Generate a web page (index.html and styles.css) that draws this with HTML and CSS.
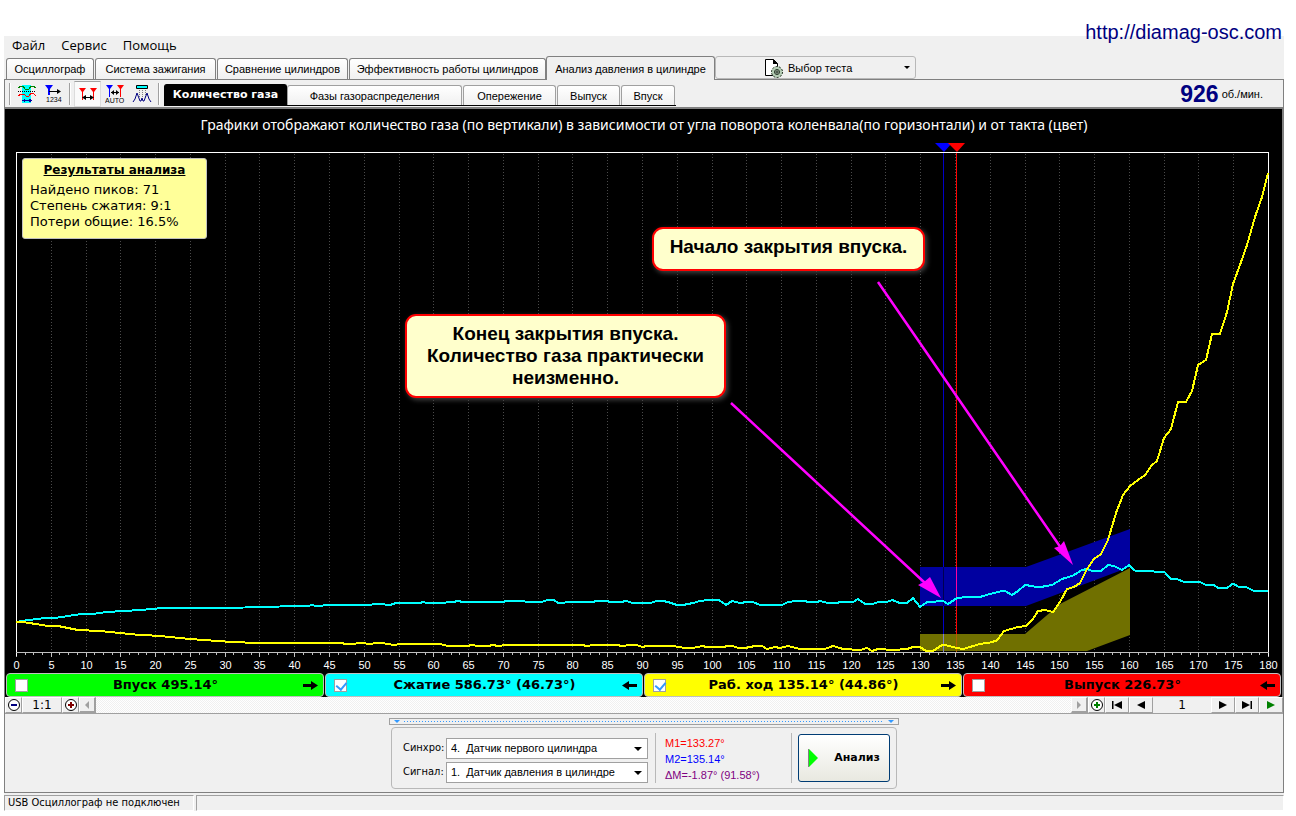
FILE: index.html
```html
<!DOCTYPE html>
<html lang="ru">
<head>
<meta charset="utf-8">
<title>Анализ давления в цилиндре</title>
<link rel="stylesheet" href="styles.css">
</head>
<body>
<a class="site-link" href="http://diamag-osc.com">http://diamag-osc.com</a>
<div class="app">
  <nav class="menu">
    <button type="button">Файл</button>
    <button type="button">Сервис</button>
    <button type="button">Помощь</button>
  </nav>

  <div class="tabs">
    <button class="tab tab-osc" type="button">Осциллограф</button>
    <button class="tab tab-ign" type="button">Система зажигания</button>
    <button class="tab tab-cmp" type="button">Сравнение цилиндров</button>
    <button class="tab tab-eff" type="button">Эффективность работы цилиндров</button>
    <button class="tab tab-prs tab-active" type="button">Анализ давления в цилиндре</button>
    <button class="test-pick" type="button">
      <svg width="20" height="22" viewBox="0 0 20 22">
        <path d="M1.5 2.500h8l4 4v12h-12z" fill="#fff" stroke="#000"/>
        <path d="M9 2v5h5z" fill="#000"/>
        <circle cx="13" cy="15" r="5.5" fill="#b4ccb4" stroke="#1c2c1c" stroke-dasharray="2 1.4"/>
        <circle cx="13" cy="15" r="4.500" fill="#b4ccb4"/>
        <circle cx="13" cy="15" r="2.500" fill="#e8f4e8" stroke="#1c2c1c"/>
        <path d="M13 13v4M11 15h4" stroke="#1c2c1c"/>
      </svg>
      <span>Выбор теста</span>
      <i class="caret"></i>
    </button>
  </div>

  <main class="panel">
    <div class="toolbar">
      <i class="grip"></i>
      <button class="tool" type="button" aria-label="Сигналы">
        <svg width="20" height="20" viewBox="0 0 20 20" fill="none" shape-rendering="crispEdges">
          <path d="M5 1h9v18H5z" fill="#00ffff"/>
          <path d="M1 4l3-2h2l2 3h4l2-3h2l3 2" stroke="#008000"/>
          <path d="M1 7.500h18" stroke="#000" stroke-dasharray="1 1"/>
          <path d="M1 12l3-2h3l2 2h3l2-3h2l3 3" stroke="#ff0000"/>
          <path d="M6 16.500h8" stroke="#0000a0"/><path d="M5 16.500l3-2v4zM15 16.500l-3-2v4z" fill="#0000a0"/>
        </svg>
      </button>
      <button class="tool" type="button" aria-label="Нумерация">
        <svg width="20" height="20" viewBox="0 0 20 20" fill="none">
          <path d="M1 1h8L6 5v6H4V5z" fill="#0000ff"/><path d="M5 7.500h10" stroke="#000"/><path d="M13 5l4 2.500-4 2.500z" fill="#000"/>
          <text x="2" y="18" class="tool-text">1234</text>
        </svg>
      </button>
      <i class="grip"></i>
      <button class="tool tool-on" type="button" aria-label="Маркеры">
        <svg width="20" height="20" viewBox="0 0 20 20" fill="none">
          <path d="M1 4h7L5 8v8H4V8zM12 4h7l-3 4v8h-1V8z" fill="#ff0000"/><path d="M5 13.500h10" stroke="#000"/><path d="M4 13.500l4-2.500v5zM16 13.500l-4-2.500v5z" fill="#000"/>
        </svg>
      </button>
      <button class="tool" type="button" aria-label="Авто маркеры">
        <svg width="20" height="20" viewBox="0 0 20 20" fill="none">
          <path d="M1 1h7L5 5v8H4V5z" fill="#0000ff"/><path d="M12 1h7l-3 4v8h-1V5z" fill="#ff0000"/><path d="M6 8.500h8" stroke="#000"/><path d="M6 8.500l3-2.500v5zM14 8.500l-3-2.500v5z" fill="#000"/>
          <text x="0" y="19" class="tool-text">AUTO</text>
        </svg>
      </button>
      <button class="tool" type="button" aria-label="Пики">
        <svg width="20" height="20" viewBox="0 0 20 20" fill="none">
          <path d="M4.500 1.500h11v3h-11z" fill="#00ffff" stroke="#000"/><path d="M7.500 6v8M10.500 6v8M13.500 6v8" stroke="#808080" stroke-dasharray="1 1"/>
          <path d="M1 18l2-3 2-6 3 8h1l1-3 1 3h1l3-8 2 6 2 3" stroke="#000080"/>
        </svg>
      </button>
      <i class="grip grip-last"></i>
      <div class="subtabs">
        <button class="subtab sub-gas subtab-active" type="button">Количество газа</button>
        <button class="subtab sub-phase" type="button">Фазы газораспределения</button>
        <button class="subtab sub-adv" type="button">Опережение</button>
        <button class="subtab sub-exh" type="button">Выпуск</button>
        <button class="subtab sub-int" type="button">Впуск</button>
      </div>
      <div class="rpm"><b>926</b><span>об./мин.</span></div>
    </div>

    <div class="scope">
      <div class="chart">
        <svg class="plot" viewBox="6 109 1276 564" fill="none">
          <text class="plot-title" x="644" y="130">Графики отображают количество газа (по вертикали) в зависимости от угла поворота коленвала(по горизонтали) и от такта (цвет)</text>
          <g id="grid"></g>
          <path d="M920 567H1026L1130 529V567L1026 606H920z" fill="#0000a0"/>
          <path d="M920 634H1025L1060 604L1130 568V635L1087 651H920z" fill="#707000"/>
          <path d="M16.500 656V152.500H1268.500V656" stroke="#fff" shape-rendering="crispEdges"/>
          <path d="M16 652.500H1269" stroke="#c0c0c0" shape-rendering="crispEdges"/>
          <path d="M943.500 153V567M943.500 606V634" stroke="#0000c8" shape-rendering="crispEdges"/>
          <path d="M943.500 567V606" stroke="#000050" shape-rendering="crispEdges"/>
          <path d="M943.500 634V652" stroke="#8080c8" shape-rendering="crispEdges"/>
          <path d="M956.500 153V652" stroke="#ff0000" shape-rendering="crispEdges"/>
          <path d="M956.500 567V606" stroke="#ff00a0" shape-rendering="crispEdges"/>
          <path d="M956.500 634V652" stroke="#b06000" shape-rendering="crispEdges"/>
          <path d="M935 143h17l-8 9z" fill="#0000ff"/>
          <path d="M948 143h17l-8 9z" fill="#ff0000"/>
          <polyline class="wave" stroke="#00ffff" points="16,622 25,620.500 45,618 58,617.500 78,614.500 92,614 107,612 140,610 157,608.500 190,608 245,607.500 280,606.500 308,606 312,605 316,606 330,605 365,605 380,604 390,605 396,603 420,603 423,602 427,603 440,603 453,602 458,601 463,602 502,602 507,601 523,601 527,602 542,602 547,600 554,600 558,603 563,603 567,602 592,602 597,601 607,601 610,602 620,602 627,601 632,603 650,603 657,601 663,601 668,602 677,605 683,605 693,603 700,601 708,600 719,600 726,605 732,601 740,603 747,602 753,602 760,605 782,605 788,602 797,601 805,601 808,602 817,602 820,601 828,603 837,603 840,602 853,602 858,599 865,604 873,604 878,602 887,602 892,600 900,603 907,603 913,598 920,607 927,602 932,602 940,601 943,601 948,604 957,598 968,597 978,597.500 990,594 1002,591 1005,591 1012,595 1018,591 1025,585 1032,586 1038,587.500 1052,585 1062,579 1073,575.500 1082,570 1087,569 1092,571 1101,571 1108,565 1114,566 1122,570 1129,565 1136,571.500 1145,571 1150,570.500 1156,572 1165,572.500 1171,579 1177,579 1184,582 1200,582 1205,584.500 1213,584.500 1218,588 1227,588 1233,583.500 1239,587 1246,587 1253,590.500 1268,590.500"/>
          <polyline class="wave" stroke="#ffff00" points="16,622 23,622 45,625.500 58,626 78,630 100,631 135,634.500 160,636 190,639 225,641.500 255,643 280,643.500 295,643 340,643 347,644 356,643.500 362,643 370,644 376,643 382,643 388,644 394,645 400,644 440,644 448,646 467,646 472,645 478,646 488,646 493,645 498,646 507,645 582,645 587,646 593,645 617,645 622,646 630,645 637,645 642,647 647,646 673,646 685,648 693,648 702,646 707,647 723,647 728,646 733,646 738,648 745,648 755,646 762,646 767,649 775,647 780,648 788,646 800,649 825,649 833,646 843,649 860,650 867,648 872,651 878,649 893,650 907,649 913,647 920,647 926,651 933,651 942,645 947,645.500 957,648 963,649 980,644 990,642.500 997,640.500 1004,631 1018,627 1026,626 1033,619 1038,611 1045,610 1053,612 1060,602 1067,589 1074,587 1080,583 1087,569 1094,559 1101,554 1108,540 1116,513 1123,495 1130,486 1138,480 1145,475 1152,465 1157,461 1164,438 1171,429 1178,402 1186,402 1192,391 1198,365 1206,360 1212,334 1220,334 1227,312 1233,284 1241,262 1247,245 1255,217 1262,197 1268,173"/>
          <path d="M731 403L925 583M878 282L1061 548" stroke="#ff00ff" stroke-width="2.500"/>
          <path d="M941 598L930 577L924 582L918 585zM1073 565L1064 541L1060 546L1054 548z" fill="#ff00ff"/>
        </svg>
        <section class="results">
          <h2>Результаты анализа</h2>
          <p>Найдено пиков: 71</p>
          <p>Степень сжатия: 9:1</p>
          <p>Потери общие: 16.5%</p>
        </section>
        <div class="callout callout-start">Начало закрытия впуска.</div>
        <div class="callout callout-end">Конец закрытия впуска. Количество газа практически неизменно.</div>
      </div>
      <div class="strokes">
        <label class="stroke stroke-intake"><input type="checkbox"><span>Впуск 495.14°</span><svg width="15" height="9" viewBox="0 0 15 9"><path d="M0 3h8V0l7 4.500L8 9V6H0z"/></svg></label>
        <label class="stroke stroke-comp"><input type="checkbox" checked><span>Сжатие 586.73° (46.73°)</span><svg width="15" height="9" viewBox="0 0 15 9"><path d="M15 3H7V0L0 4.500 7 9V6h8z"/></svg></label>
        <label class="stroke stroke-power"><input type="checkbox" checked><span>Раб. ход 135.14° (44.86°)</span><svg width="15" height="9" viewBox="0 0 15 9"><path d="M0 3h8V0l7 4.500L8 9V6H0z"/></svg></label>
        <label class="stroke stroke-exh"><input type="checkbox"><span>Выпуск 226.73°</span><svg width="15" height="9" viewBox="0 0 15 9"><path d="M15 3H7V0L0 4.500 7 9V6h8z"/></svg></label>
      </div>
    </div>

    <div class="scrollrow">
      <button class="sq w17" type="button" aria-label="Уменьшить"><svg width="14" height="14" viewBox="0 0 14 14"><circle cx="7" cy="7" r="5.500" fill="#fff" stroke="#000"/><path d="M4 7h6" stroke="#000080" stroke-width="2"/></svg></button>
      <button class="sq w39" type="button">1:1</button>
      <button class="sq w17" type="button" aria-label="Увеличить"><svg width="14" height="14" viewBox="0 0 14 14"><circle cx="7" cy="7" r="5.500" fill="#fff" stroke="#000"/><path d="M4 7h6M7 4v6" stroke="#800000" stroke-width="2"/></svg></button>
      <button class="sq sq-raised w17" type="button" aria-label="Влево"><svg width="6" height="8" viewBox="0 0 6 8"><path d="M5 0v8L1 4z" fill="#a0a0a0"/></svg></button>
      <div class="track"></div>
      <button class="sq sq-raised w17" type="button" aria-label="Вправо"><svg width="6" height="8" viewBox="0 0 6 8"><path d="M1 0v8l4-4z" fill="#a0a0a0"/></svg></button>
      <button class="sq w17" type="button" aria-label="Добавить"><svg width="14" height="14" viewBox="0 0 14 14"><circle cx="7" cy="7" r="5.500" fill="#fff" stroke="#000"/><path d="M4 7h6M7 4v6" stroke="#008000" stroke-width="2"/></svg></button>
      <button class="sq w23" type="button" aria-label="Первый"><svg width="10" height="8" viewBox="0 0 10 8"><path d="M0 0h1.500v8H0zM10 0v8L2 4z"/></svg></button>
      <button class="sq w23" type="button" aria-label="Предыдущий"><svg width="8" height="8" viewBox="0 0 8 8"><path d="M8 0v8L0 4z"/></svg></button>
      <output class="page-no">1</output>
      <button class="sq w23" type="button" aria-label="Следующий"><svg width="8" height="8" viewBox="0 0 8 8"><path d="M0 0v8l8-4z"/></svg></button>
      <button class="sq w23" type="button" aria-label="Последний"><svg width="10" height="8" viewBox="0 0 10 8"><path d="M8.500 0H10v8H8.500zM0 0v8l8-4z"/></svg></button>
      <button class="sq w23" type="button" aria-label="Пуск"><svg width="8" height="8" viewBox="0 0 8 8"><path d="M0 0v8l8-4z" fill="#008000"/></svg></button>
    </div>

    <div class="bottom">
      <div class="splitter"><i class="mini"></i><i class="dots"></i><i class="mini"></i></div>
      <div class="group">
        <form class="sources">
          <label for="sync">Синхро:</label>
          <div class="pick"><select id="sync"><option>4.&nbsp; Датчик первого цилиндра</option></select></div>
          <label for="signal">Сигнал:</label>
          <div class="pick"><select id="signal"><option>1.&nbsp; Датчик давления в цилиндре</option></select></div>
        </form>
        <div class="markers">
          <p class="m-one">M1=133.27°</p>
          <p class="m-two">M2=135.14°</p>
          <p class="m-delta">ΔM=-1.87° (91.58°)</p>
        </div>
        <button class="analyse" type="button"><svg width="11" height="20" viewBox="0 0 11 20"><path d="M1 1v18l9-9z" fill="#00ff00"/><path d="M.5 19V1" stroke="#808080"/></svg><span>Анализ</span></button>
      </div>
    </div>
  </main>

  <footer class="status">
    <div class="status-main">USB Осциллограф не подключен</div>
    <div class="status-rest"></div>
  </footer>
</div>
<script src="chart.js"></script>
</body>
</html>
```
FILE: chart.js
```js
(function () {
  var NS = 'http://www.w3.org/2000/svg';
  var grid = document.getElementById('grid');
  var left = 16, width = 1252, top = 154, base = 653;

  function add(name, attrs, text) {
    var el = document.createElementNS(NS, name);
    Object.keys(attrs).forEach(function (k) { el.setAttribute(k, attrs[k]); });
    if (text !== undefined) el.textContent = text;
    grid.appendChild(el);
  }

  // Four minor divisions in each five degrees of crankshaft angle.
  for (var i = 0; i <= 144; i++) {
    var x = Math.round(left + width * i / 144) + 0.5;
    var major = i % 4 === 0;
    add('path', { 'class': 'tick', d: 'M' + x + ' ' + base + 'v' + (major ? 4 : 2) });
    if (!major) continue;
    if (i > 0 && i < 144) {
      add('path', { 'class': 'gridline', d: 'M' + x + ' ' + top + 'V' + base });
    }
    add('text', { 'class': 'axis-label', x: x, y: 669 }, i / 4 * 5);
  }
})();
```
FILE: styles.css
```css
* { box-sizing: border-box; }

body {
  margin: 0;
  padding: 36px 12px 0 4px;
  background: #fff;
  color: #000;
  font: 11px/14px "Liberation Sans", sans-serif;
}

button, select { margin: 0; padding: 0; border: 0; background: none; color: inherit; font: inherit; }
button { display: flex; align-items: center; justify-content: center; white-space: nowrap; }
p, h2 { margin: 0; }
svg { display: block; flex: none; }

.site-link {
  position: absolute;
  top: 20px;
  right: 14px;
  color: #000080;
  font-size: 20px;
  line-height: 24px;
  text-decoration: none;
}

.app { background: #f0f0f0; }

.menu { display: flex; gap: 16px; height: 20px; padding-left: 8px; }
.menu button { height: 18px; font: 13px/18px "Open Sans", "Noto Sans", sans-serif; }

.tabs { display: flex; align-items: flex-end; height: 24px; padding-left: 2px; border-bottom: 1px solid #808080; }
.tab {
  height: 21px;
  margin-right: 1px;
  border: 1px solid #808080;
  border-bottom: 0;
  border-radius: 3px 3px 0 0;
  background: linear-gradient(#fff, #f0f0f0);
}
.tab-osc { width: 88px; }
.tab-ign { width: 121px; }
.tab-cmp { width: 131px; }
.tab-eff { width: 197px; margin-right: 0; }
.tab-active { width: 169px; height: 24px; margin-bottom: -1px; background: #f0f0f0; margin-right: 0; }
.test-pick {
  width: 201px;
  height: 23px;
  gap: 4px;
  padding: 0 5px 0 48px;
  border: 1px solid #b8b8b8;
  border-radius: 3px;
  justify-content: flex-start;
}
.caret { margin-left: auto; border: 3px solid transparent; border-top-color: #000; border-bottom: 0; }

.panel { border: 1px solid #808080; border-top: 0; }
.toolbar { display: flex; align-items: center; height: 27px; padding: 0 20px 0 4px; }
.grip { width: 2px; height: 22px; margin-right: 4px; border-left: 1px solid #a0a0a0; border-right: 1px solid #fff; }
.grip + .tool { margin-left: -2px; }
.tool { width: 27px; height: 26px; }
.tool + .grip { margin: 0 5px 0 2px; }
.tool + .grip-last { margin: 0 4px 0 3px; }
.tool-on { background: #fafafa; border: 1px solid #dcdcdc; border-top-color: #a0a0a0; }
.tool-text { fill: #000; font: 7px "Liberation Sans", sans-serif; }
.subtabs { display: flex; align-self: flex-end; border-bottom: 1px solid #000; height: 22px; margin-bottom: 1px; }
.subtab {
  height: 20px;
  margin: 1px 1px 0 0;
  border: 1px solid #a0a0a0;
  border-bottom: 0;
  border-radius: 3px 3px 0 0;
  background: linear-gradient(#fff, #f0f0f0);
}
.sub-gas { width: 123px; height: 21px; margin: 0; }
.sub-phase { width: 175px; }
.sub-adv { width: 93px; }
.sub-exh { width: 63px; }
.sub-int { width: 54px; }
.subtab-active { border-color: #000; background: #000; color: #fff; font: bold 11px/14px "DejaVu Sans", sans-serif; }
.rpm { display: flex; align-items: center; gap: 3px; margin-left: auto; }
.rpm b { color: #000080; font-size: 23px; line-height: 26px; }

.scope { background: #000; border: 2px solid #808080; border-width: 2px 1px 0 0; padding-left: 1px; }
.chart { position: relative; }
.plot { width: 100%; height: auto; }
.plot-title { fill: #fff; font: 14px "Noto Sans", sans-serif; text-anchor: middle; }
.gridline { stroke: #4a4a4a; stroke-dasharray: 1 2; shape-rendering: crispEdges; }
.tick { stroke: #c0c0c0; shape-rendering: crispEdges; }
.axis-label { fill: #fff; font: 11px "Liberation Sans", sans-serif; text-anchor: middle; }
.wave { stroke-width: 2; shape-rendering: crispEdges; }

.results {
  position: absolute;
  left: 16px;
  top: 49px;
  width: 185px;
  height: 81px;
  padding: 3px 7px;
  border: 1px solid #c0c0c0;
  border-radius: 3px;
  background: #ffff99;
  font: 13px/16px "DejaVu Sans", sans-serif;
}
.results h2 { margin-bottom: 4px; font: bold 12px/16px "DejaVu Sans", sans-serif; text-align: center; text-decoration: underline; }

.callout {
  position: absolute;
  border: 2px solid #ff0000;
  border-radius: 11px;
  background: #ffffcc;
  box-shadow: 2px 2px 5px #444;
  font-size: 19px;
  font-weight: bold;
  line-height: 22px;
  text-align: center;
}
.callout-start { left: 646px; top: 118px; width: 273px; height: 44px; padding-top: 7px; }
.callout-end { left: 399px; top: 205px; width: 321px; height: 84px; padding: 7px 12px 0; }

.strokes { display: grid; grid-template-columns: repeat(4, 1fr); gap: 1px; padding-right: 1px; }
.stroke {
  display: flex;
  align-items: center;
  height: 24px;
  padding: 0 5px 0 8px;
  border: 1px solid #c0c0c0;
  border-radius: 4px;
  font: bold 13px/18px "DejaVu Sans", sans-serif;
}
.stroke span { flex: 1; text-align: center; }
.stroke input {
  appearance: none;
  width: 13px;
  height: 13px;
  margin: 0;
  border: 1px solid #a0a0a0;
  background: #fff;
}
.stroke input:checked::before {
  content: "";
  display: block;
  width: 5px;
  height: 8px;
  margin: 0 0 0 3px;
  border: solid #3399ff;
  border-width: 0 2px 2px 0;
  transform: rotate(40deg);
}
.stroke-intake { background: #00ff00; }
.stroke-comp { background: #00ffff; }
.stroke-power { background: #ffff00; }
.stroke-exh { background: #ff0000; }

.scrollrow { display: flex; height: 17px; border-bottom: 1px solid #a0a0a0; }
.sq { border: 1px solid; border-color: #fff #a0a0a0 #a0a0a0 #fff; background: #f0f0f0; font: 12px/14px "DejaVu Sans", sans-serif; }
.sq-raised { border-width: 1px 2px 2px 1px; }
.w17 { width: 17px; }
.w23 { width: 24px; }
.w39 { width: 40px; }
.track { flex: 1; background: repeating-conic-gradient(#f0f0f0 0 25%, #fff 0 50%) 0 0 / 2px 2px; }
.page-no { width: 58px; font: 12px/16px "DejaVu Sans", sans-serif; text-align: center; }

.bottom { display: flex; flex-direction: column; align-items: center; gap: 2px; padding: 4px 0 3px; }
.splitter { display: flex; align-items: center; justify-content: space-between; width: 510px; height: 7px; padding: 0 4px; border: 1px solid #a0a0a0; }
.mini { border: 3px solid transparent; border-top-color: #3399ff; border-bottom: 0; }
.dots { flex: 1; height: 1px; margin: 0 4px; background: repeating-linear-gradient(90deg, #3399ff 0 1px, transparent 1px 3px); }
.group { display: flex; align-items: center; width: 506px; height: 62px; padding: 0 6px 0 11px; border: 1px solid #b8b8b8; border-radius: 4px; }
.sources { display: grid; grid-template-columns: 40px 202px; gap: 3px; align-items: center; padding-top: 4px; }
.sources label { font: 11px/14px "DejaVu Sans Condensed", sans-serif; white-space: nowrap; }
.pick { position: relative; }
.pick::after { content: ""; position: absolute; right: 6px; top: 9px; border: 4px solid transparent; border-top-color: #000; border-bottom: 0; pointer-events: none; }
.pick select { display: block; appearance: none; width: 100%; height: 21px; padding-left: 4px; border: 1px solid #a0a0a0; background: #fff; }
.markers { width: 137px; height: 50px; margin-left: 7px; padding: 2px 0 0 9px; border: solid #b8b8b8; border-width: 0 1px; line-height: 16px; }
.m-one { color: #ff0000; }
.m-two { color: #0000ff; }
.m-delta { color: #800080; }
.analyse {
  width: 92px;
  height: 48px;
  gap: 15px;
  margin-left: auto;
  border: 1px solid #003c74;
  border-radius: 3px;
  background: linear-gradient(#fff, #e8e8e0);
  font: bold 11px/14px "DejaVu Sans", sans-serif;
}

.status { display: flex; gap: 2px; padding-top: 2px; font: 11px/14px "DejaVu Sans Condensed", sans-serif; }
.status div { height: 16px; border: 1px solid; border-color: #a0a0a0 #fff #fff #a0a0a0; }
.status-main { width: 190px; padding-left: 3px; white-space: nowrap; }
.status-rest { flex: 1; }
```
